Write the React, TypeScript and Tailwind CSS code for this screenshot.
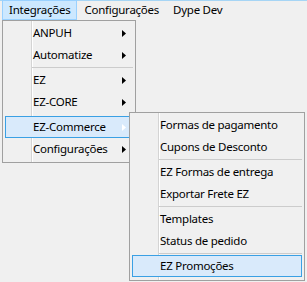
import { Fragment } from 'react';

type Entry = { label?: string; sub?: boolean; sep?: boolean; gap?: boolean; active?: boolean };

const mainItems: Entry[] = [
  { label: 'ANPUH', sub: true },
  { label: 'Automatize', sub: true },
  { sep: true },
  { label: 'EZ', sub: true },
  { label: 'EZ-CORE', sub: true },
  { gap: true },
  { label: 'EZ-Commerce', sub: true, active: true },
  { label: 'Configurações', sub: true },
];

const commerceItems: Entry[] = [
  { label: 'Formas de pagamento' },
  { label: 'Cupons de Desconto' },
  { sep: true },
  { label: 'EZ Formas de entrega' },
  { label: 'Exportar Frete EZ' },
  { sep: true },
  { label: 'Templates' },
  { label: 'Status de pedido' },
  { sep: true },
  { label: 'EZ Promoções', active: true },
];

const Arrow = ({ light }: { light?: boolean }) => (
  <svg width="4" height="7" viewBox="0 0 4 7" className="ml-auto mr-[6px] shrink-0">
    <path d="M0 0 L4 3.5 L0 7 Z" fill={light ? '#ffffff' : '#000000'} />
  </svg>
);

const MenuList = ({ items }: { items: Entry[] }) => (
  <>
    {/* gutter */}
    <div className="absolute left-[28px] top-0 bottom-0 w-px bg-[#d4d4d4]" />
    <div className="absolute left-[29px] top-0 bottom-0 w-px bg-white" />
    {items.map((item, i) => (
      <Fragment key={i}>
        {item.sep ? (
          <div className="relative h-[3px] ml-[29px] mr-[2px] flex flex-col justify-center">
            <div className="h-px bg-[#cccccc]" />
          </div>
        ) : item.gap ? (
          <div className="h-[3px]" />
        ) : (
          <div
            className={`relative flex items-center h-[22px] mx-[2px] pl-[27px] border ${
              item.active ? 'border-[#3aa0e4] bg-[#d9eafb]' : 'border-transparent'
            }`}
          >
            <span className="whitespace-nowrap">{item.label}</span>
            {item.sub && <Arrow light={item.active} />}
          </div>
        )}
      </Fragment>
    ))}
  </>
);

export default function App() {
  return (
    <div className="relative w-[307px] h-[282px] overflow-hidden bg-[#f0f0f0] text-[11.5px] tracking-[-0.25px] text-black font-['Noto_Sans',sans-serif]">
      <div className="flex h-[20px] pl-[2px] leading-[18px] shadow-[inset_0_1px_0_#a6d5f5]">
        <div className="px-[6px] border border-[#99d1ff] bg-[#cce8ff]">Integrações</div>
        <div className="px-[6px] border border-transparent">Configurações</div>
        <div className="px-[6px] border border-transparent">Dype Dev</div>
      </div>

      <div className="absolute left-[2px] top-[20px] w-[134px] border border-[#a0a0a0] bg-[#f0f0f0] pt-px pb-[2px]">
        <MenuList items={mainItems} />
      </div>

      <div className="absolute left-[129px] top-[112px] w-[176px] border border-[#a0a0a0] bg-[#f0f0f0] pt-px pb-[3px]">
        <MenuList items={commerceItems} />
      </div>
    </div>
  );
}
